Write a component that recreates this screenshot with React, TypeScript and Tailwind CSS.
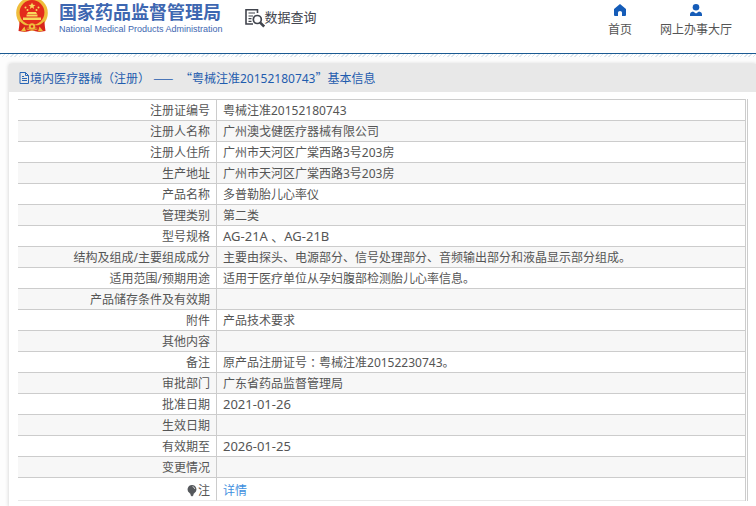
import React from 'react';

interface DetailRow {
  label: string;
  value: React.ReactNode;
  latin?: boolean;
}

const rows: DetailRow[] = [
  { label: '注册证编号', value: '粤械注准20152180743' },
  { label: '注册人名称', value: '广州澳戈健医疗器械有限公司' },
  { label: '注册人住所', value: '广州市天河区广棠西路3号203房' },
  { label: '生产地址', value: '广州市天河区广棠西路3号203房' },
  { label: '产品名称', value: '多普勒胎儿心率仪' },
  { label: '管理类别', value: '第二类' },
  { label: '型号规格', value: 'AG-21A 、AG-21B', latin: true },
  { label: '结构及组成/主要组成成分', value: '主要由探头、电源部分、信号处理部分、音频输出部分和液晶显示部分组成。' },
  { label: '适用范围/预期用途', value: '适用于医疗单位从孕妇腹部检测胎儿心率信息。' },
  { label: '产品储存条件及有效期', value: '' },
  { label: '附件', value: '产品技术要求' },
  { label: '其他内容', value: '' },
  {
    label: '备注',
    value: (
      <>
        原产品注册证号<span className="align-top font-['Noto_Sans_CJK_TC',sans-serif]">：</span>粤械注准20152230743。
      </>
    ),
  },
  { label: '审批部门', value: '广东省药品监督管理局' },
  { label: '批准日期', value: '2021-01-26', latin: true },
  { label: '生效日期', value: '' },
  { label: '有效期至', value: '2026-01-25', latin: true },
  { label: '变更情况', value: '' },
];

const Emblem: React.FC = () => (
  <svg width="32" height="33" viewBox="0 0 32 33" aria-hidden="true">
    <path d="M4 20 L2.5 31 L9 32 L16 30.5 L23 32 L29.5 31 L28 20 Z" fill="#d8261c" />
    <circle cx="16" cy="13" r="15.8" fill="#efbd3c" />
    <circle cx="16" cy="12.5" r="12.4" fill="#e32c1c" />
    <path d="M16 2.5 l1 2.3 2.5 .1 -2 1.6 .7 2.4 -2.2 -1.4 -2.2 1.4 .7 -2.4 -2 -1.6 2.5 -.1z" fill="#f8d95c" />
    <g fill="#f8d95c">
      <circle cx="9.5" cy="7.5" r="1" />
      <circle cx="11.5" cy="10" r="1" />
      <circle cx="20.5" cy="10" r="1" />
      <circle cx="22.5" cy="7.5" r="1" />
      <path d="M12 12h8l1 2H11z M10.5 14.5h11v2h-11z M7 17.5h18v2.5H7z" />
    </g>
    <path d="M3.5 21 C8 26 12 26 16 24.5 C20 26 24 26 28.5 21 L28 27 L22 28 L16 27 L10 28 L4 27Z" fill="#d8261c" />
    <path d="M5 31l3.5-4.5 1.5 5z M27 31l-3.5-4.5 -1.5 5z" fill="#efbd3c" />
    <circle cx="16" cy="26.5" r="3.2" fill="#efbd3c" />
    <circle cx="16" cy="26.5" r="1.2" fill="#d8261c" />
    <path d="M10.5 29 Q16 32 21.5 29" fill="none" stroke="#efbd3c" strokeWidth=".8" />
  </svg>
);

const QueryIcon: React.FC = () => (
  <svg width="20" height="20" viewBox="0 0 20 20" fill="none" stroke="#41444d" aria-hidden="true">
    <path d="M12.5 5V1.8H1V16h7" strokeWidth="1.6" />
    <path d="M3.5 5h6.5M3.5 8h4.5M3.5 10.7h3M3.5 13.4h3" strokeWidth="1.2" />
    <circle cx="12.3" cy="11.5" r="4" strokeWidth="1.7" />
    <path d="M15.2 14.6l4 4" strokeWidth="2.6" />
  </svg>
);

const HomeIcon: React.FC = () => (
  <svg width="12" height="12" viewBox="0 0 12 12" fill="#155cb8" aria-hidden="true">
    <path d="M6 0 L12 5 V11 Q12 12 11 12 H8 V8.5 Q8 7 6 7 Q4 7 4 8.5 V12 H1 Q0 12 0 11 V5 Z" />
  </svg>
);

const UserIcon: React.FC = () => (
  <svg width="12" height="12" viewBox="0 0 12 12" fill="#155cb8" aria-hidden="true">
    <circle cx="6" cy="3.3" r="3.3" />
    <path d="M0 12 V10.5 Q0 8 3 7.5 L6 9.5 L9 7.5 Q12 8 12 10.5 V12 Z" />
  </svg>
);

const DocIcon: React.FC = () => (
  <svg width="11" height="12" viewBox="0 0 11 12" fill="none" stroke="#2a66b5" aria-hidden="true">
    <path d="M1 .5h5.5l3 3v8H1z M6.5 .5v3h3" />
    <path d="M3 4.5h2M3 6.5h5M3 8.5h5" />
  </svg>
);

const BulbIcon: React.FC = () => (
  <svg width="10" height="12" viewBox="0 0 10 12" aria-hidden="true">
    <path d="M5 0 A4.4 4.4 0 0 1 7.5 8 L6.5 9 H3.5 L2.5 8 A4.4 4.4 0 0 1 5 0Z" fill="#55585c" />
    <path d="M3.5 9h3v1l-1 1.2h-1l-1-1.2z" fill="#55585c" />
    <path d="M5.5 1.6 A2.8 2.8 0 0 1 7.8 4" fill="none" stroke="#fff" strokeWidth=".7" />
  </svg>
);

const App: React.FC = () => {
  return (
    <div className="min-h-screen overflow-hidden bg-[#fdfdfd] font-['Noto_Sans','Noto_Sans_CJK_SC',sans-serif] text-xs text-[#555]">
      {/* Header */}
      <header className="flex h-[54px] items-start border-b border-[#1b5a92] bg-white pr-6 pl-4">
        <a href="#" className="flex items-start gap-[11px] text-[#3e67b1]">
          <Emblem />
          <span className="block pt-px">
            <span className="block text-lg leading-[22px] font-bold whitespace-nowrap">国家药品监督管理局</span>
            <span className="block font-['Liberation_Sans',sans-serif] text-[9px] leading-3 font-normal whitespace-nowrap">
              National Medical Products Administration
            </span>
          </span>
        </a>
        <a href="#" className="ml-[22px] flex items-start pt-2 text-[13px] leading-[18px] whitespace-nowrap text-[#41444d]">
          <QueryIcon />
          数据查询
        </a>
        <nav className="ml-auto flex gap-7 pt-1 leading-[18px] whitespace-nowrap">
          <a href="#" className="flex flex-col items-center gap-[5px]">
            <HomeIcon />
            首页
          </a>
          <a href="#" className="flex flex-col items-center gap-[5px]">
            <UserIcon />
            网上办事大厅
          </a>
        </nav>
      </header>
      <div className="h-[3px] bg-[repeating-linear-gradient(135deg,#dce6ee_0_1px,#fff_1px_3px)]" />

      {/* Details */}
      <main className="mt-[7px] ml-[9px] bg-white pb-1.5 shadow-[0_0_4px_#ccc]">
        <h1 className="flex h-7 items-center bg-[#e8e8e8] pl-2.5 text-xs whitespace-pre text-[#1f5cae]">
          <DocIcon />
          <span>
            境内医疗器械（注册）{' '}
            <span className="mr-1 font-['Noto_Sans_CJK_SC',sans-serif]">——</span>
            <span className="font-['Noto_Sans_CJK_SC',sans-serif]"> “</span>
            粤械注准20152180743<span className="font-['Noto_Sans_CJK_SC',sans-serif]">”</span>基本信息
          </span>
        </h1>
        <div className="mt-[7px] mr-2 ml-[9px] border-r border-[#ccc] pr-px">
          <table className="w-full table-fixed border-separate border-spacing-0 border-t border-r border-[#ccc]">
            <colgroup>
              <col className="w-[199px]" />
              <col />
            </colgroup>
            <tbody>
              {rows.map((row) => (
                <tr key={row.label} className="even:bg-[#f7f7f7]">
                  <th scope="row" className="h-[21px] border-r border-b border-[#ccc] pt-0.5 pr-1.5 text-right leading-[18px] font-normal">
                    {row.label}
                  </th>
                  <td className={`border-b border-[#ccc] pl-1.5 leading-[18px] ${row.latin ? 'pb-px text-[13px]' : 'pt-0.5'}`}>
                    {row.value}
                  </td>
                </tr>
              ))}
              <tr>
                <th scope="row" className="h-[23px] border-r border-b border-r-[#ccc] border-b-[#e8e8e8] pt-1 pr-1.5 leading-[18px] font-normal">
                  <span className="flex items-center justify-end gap-px">
                    <BulbIcon />注
                  </span>
                </th>
                <td className="border-b border-[#e8e8e8] pt-1 pl-1.5 leading-[18px]">
                  <a href="#" className="text-[#3f90e0]">详情</a>
                </td>
              </tr>
            </tbody>
          </table>
        </div>
      </main>
    </div>
  );
};

export default App;
